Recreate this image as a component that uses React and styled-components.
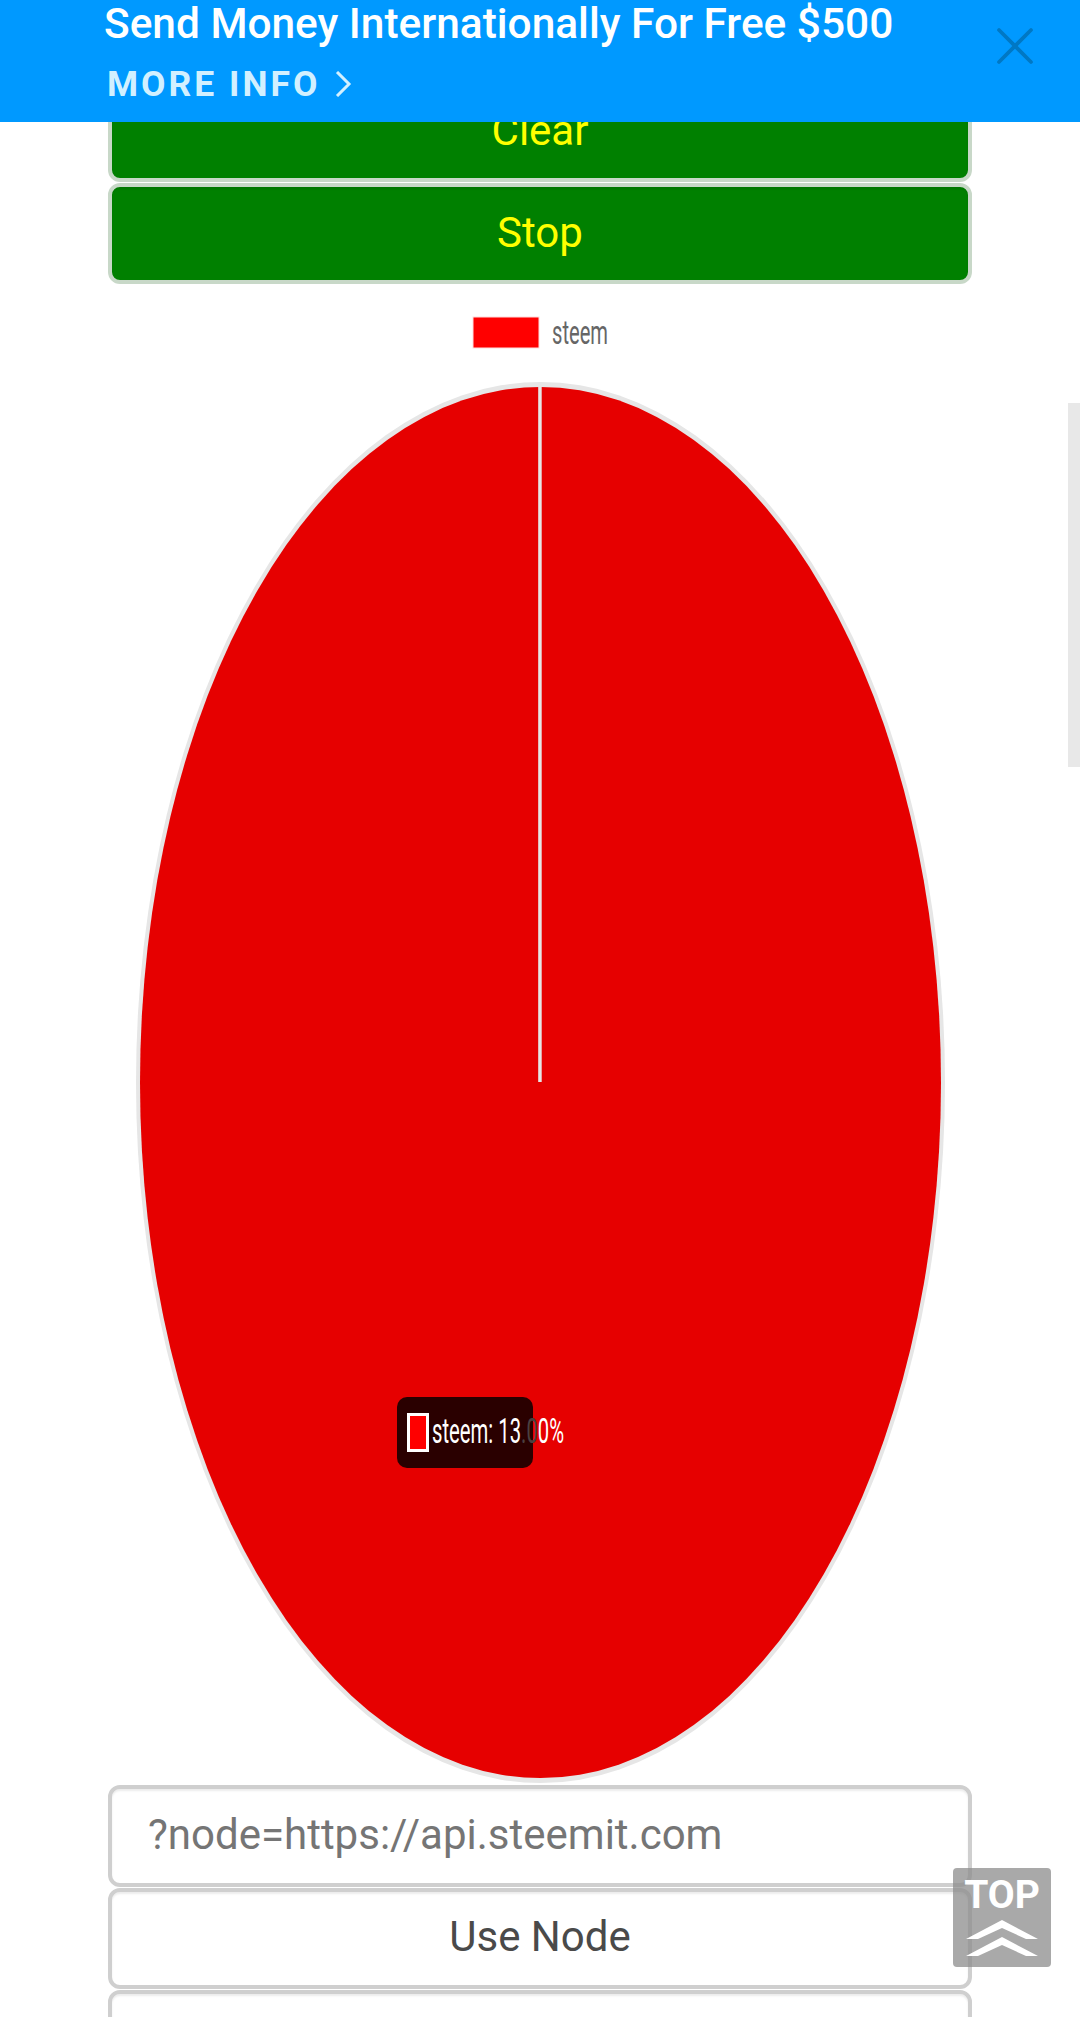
import React from "react";
import styled, { createGlobalStyle } from "styled-components";
import { X } from "lucide-react";

const GlobalStyle = createGlobalStyle`
  html, body {
    margin: 0;
    padding: 0;
    background: #fff;
    font-family: Roboto, "Liberation Sans", sans-serif;
  }
`;

function PieChart() {
  return (
    <ChartSvg viewBox="0 0 864 1499">
      {/* legend */}
      <rect x="365" y="32" width="66" height="31" fill="#ff0000" stroke="#ffdcdc" strokeWidth="1" />
      <text x="444" y="59" fontSize="34" fill="#666" textLength="56" lengthAdjust="spacingAndGlyphs">
        steem
      </text>
      {/* pie */}
      <ellipse cx="432.5" cy="797.5" rx="404.5" ry="700.5" fill="#e6e6e6" />
      <ellipse cx="432.5" cy="797.5" rx="400.5" ry="695.5" fill="#e60000" />
      <rect x="430.2" y="98" width="3.5" height="699" fill="#e6e6e6" />
      {/* tooltip */}
      <rect x="289" y="1112" width="136" height="71" rx="10" fill="#2a0000" />
      <rect x="300.5" y="1129.5" width="19" height="36" fill="#ff0000" stroke="#fff" strokeWidth="3" />
      <text x="324" y="1158" fontSize="35" fill="#fff" textLength="132" lengthAdjust="spacingAndGlyphs">
        steem: 13<tspan fill="#4a4040">.0</tspan>0%
      </text>
    </ChartSvg>
  );
}

export default function App() {
  return (
    <Page>
      <GlobalStyle />
      <Banner>
        <BannerText>
          <BannerTitle>Send Money Internationally For Free $500</BannerTitle>
          <MoreInfo>
            MORE INFO
            <svg width="18" height="26" viewBox="0 0 18 26">
              <path d="M3 1 L15 13 L3 25" fill="none" stroke="currentColor" strokeWidth="3" />
            </svg>
          </MoreInfo>
        </BannerText>
        <CloseButton>
          <X size={64} strokeWidth={1.4} />
        </CloseButton>
      </Banner>

      <Scrollbar />

      <Content>
        <Button $green>Clear</Button>
        <Button $green>Stop</Button>
        <PieChart />
        <NodeInput placeholder="?node=https://api.steemit.com" readOnly />
        <Button>Use Node</Button>
        <Button />
      </Content>

      <TopButton>
        TOP
        <svg width="72" height="37" viewBox="0 0 72 37">
          <path d="M0 19 L36 0 L72 19 L60 19 L36 8 L12 19 Z" fill="#fff" />
          <path d="M0 36 L36 17 L72 36 L60 36 L36 25 L12 36 Z" fill="#fff" />
        </svg>
      </TopButton>
    </Page>
  );
}

const Page = styled.div`
  position: relative;
  width: 1080px;
  height: 2017px;
  overflow: hidden;
  background: #fff;
`;

const Banner = styled.div`
  position: absolute;
  top: 0;
  left: 0;
  right: 0;
  height: 122px;
  background: #0099ff;
  display: flex;
  justify-content: space-between;
  z-index: 3;
`;

const BannerText = styled.div`
  display: flex;
  flex-direction: column;
  padding: 1px 0 0 104px;
`;

const BannerTitle = styled.div`
  font-size: 42.4px;
  font-weight: 500;
  line-height: 46px;
  color: #fff;
`;

const MoreInfo = styled.div`
  display: flex;
  align-items: center;
  gap: 14px;
  margin-top: 17px;
  padding-left: 3px;
  font-size: 35.5px;
  font-weight: 700;
  line-height: 40px;
  letter-spacing: 3px;
  color: #d2f0ff;
`;

const CloseButton = styled.div`
  display: flex;
  padding: 14px 33px 0 0;
  color: #0078c4;
`;

const Scrollbar = styled.div`
  position: absolute;
  top: 403px;
  right: 0;
  width: 12px;
  height: 364px;
  background: #e8e8e8;
`;

const Content = styled.div`
  display: flex;
  flex-direction: column;
  gap: 1px;
  width: 864px;
  margin-left: 108px;
  padding-top: 81px;
`;

const Button = styled.div`
  box-sizing: border-box;
  flex: none;
  display: flex;
  align-items: center;
  justify-content: center;
  height: 101px;
  padding-bottom: ${(p) => (p.$green ? "3px" : "5px")};
  border: 4px solid ${(p) => (p.$green ? "#c8d8c8" : "#cfcfcf")};
  border-radius: 12px;
  background: ${(p) => (p.$green ? "#008000" : "#fff")};
  box-shadow: inset 0 2px 2px rgba(0, 0, 0, 0.08);
  color: ${(p) => (p.$green ? "#ffff00" : "#4a4a4a")};
  font-size: 42px;
`;

const ChartSvg = styled.svg`
  display: block;
  flex: none;
  width: 864px;
  height: 1499px;
  font-family: Roboto, "Liberation Sans", sans-serif;
`;

const NodeInput = styled.input`
  box-sizing: border-box;
  flex: none;
  width: 100%;
  height: 102px;
  padding: 0 36px 4px;
  border: 4px solid #cfcfcf;
  border-radius: 12px;
  outline: none;
  background: #fff;
  box-shadow: inset 0 2px 2px rgba(0, 0, 0, 0.08);
  font-family: Roboto, "Liberation Sans", sans-serif;
  font-size: 42px;

  &::placeholder {
    color: #757575;
    opacity: 1;
  }
`;

const TopButton = styled.div`
  position: absolute;
  left: 953px;
  top: 1868px;
  box-sizing: border-box;
  width: 98px;
  height: 99px;
  padding-top: 6px;
  display: flex;
  flex-direction: column;
  align-items: center;
  gap: 4px;
  border-radius: 4px;
  background: rgba(140, 140, 140, 0.75);
  color: #fff;
  font-size: 39px;
  font-weight: 700;
  line-height: 42px;
`;
